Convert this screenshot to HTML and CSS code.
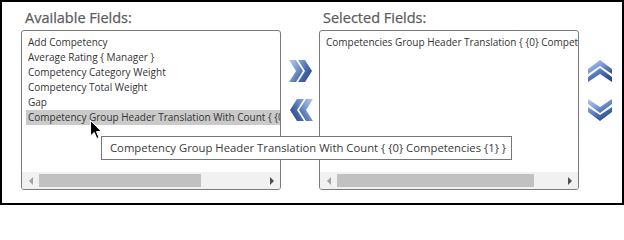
FILE: index.html
```html
<!DOCTYPE html>
<html>
<head>
<meta charset="utf-8">
<link rel="stylesheet" href="styles.css">
</head>
<body>
<svg class="defs" width="0" height="0">
  <defs>
    <linearGradient id="gA" x1="0" y1="0" x2="1" y2="1">
      <stop offset="0" stop-color="#b6c9ec"/>
      <stop offset="0.45" stop-color="#7f9dd4"/>
      <stop offset="1" stop-color="#2b4d92"/>
    </linearGradient>
    <linearGradient id="gB" x1="0" y1="0" x2="1" y2="1">
      <stop offset="0" stop-color="#8aa6dc"/>
      <stop offset="0.5" stop-color="#4a6bb0"/>
      <stop offset="1" stop-color="#1e3c7e"/>
    </linearGradient>
  </defs>
</svg>
<div class="frame">
  <div class="col">
    <div class="label">Available Fields:</div>
    <div class="listbox">
      <div class="items">
        <div class="item">Add Competency</div>
        <div class="item">Average Rating { Manager }</div>
        <div class="item">Competency Category Weight</div>
        <div class="item">Competency Total Weight</div>
        <div class="item">Gap</div>
        <div class="item sel">Competency Group Header Translation With Count { {0} Competencies {1} }</div>
      </div>
      <div class="hscroll">
        <div class="sbtn"><span class="tri-l dim"></span></div>
        <div class="track"><div class="thumb thumb-left"></div></div>
        <div class="sbtn"><span class="tri-r"></span></div>
      </div>
    </div>
  </div>
  <div class="mid">
    <svg class="icon ic-add" viewBox="0 0 26 24" width="26" height="24">
      <polygon points="1,1 8,1 15,12 8,23 1,23 8,12" fill="url(#gA)"/>
      <polygon points="10,1 17,1 24,12 17,23 10,23 17,12" fill="url(#gB)"/>
    </svg>
    <svg class="icon ic-rem" viewBox="0 0 26 24" width="26" height="24">
      <g transform="translate(26,0) scale(-1,1)">
        <polygon points="1,1 8,1 15,12 8,23 1,23 8,12" fill="url(#gA)"/>
        <polygon points="10,1 17,1 24,12 17,23 10,23 17,12" fill="url(#gB)"/>
      </g>
    </svg>
  </div>
  <div class="col">
    <div class="label">Selected Fields:</div>
    <div class="listbox">
      <div class="items">
        <div class="item">Competencies Group Header Translation { {0} Competencies {1} }</div>
      </div>
      <div class="hscroll">
        <div class="sbtn"><span class="tri-l dim"></span></div>
        <div class="track"><div class="thumb thumb-right"></div></div>
        <div class="sbtn"><span class="tri-r"></span></div>
      </div>
    </div>
  </div>
  <div class="side">
    <svg class="icon ic-up" viewBox="0 0 26 24" width="26" height="24">
      <polygon points="1,10 13,1 25,10 25,15 13,7 1,15" fill="url(#gA)"/>
      <polygon points="1,18 13,9 25,18 25,23 13,15 1,23" fill="url(#gB)"/>
    </svg>
    <svg class="icon ic-down" viewBox="0 0 26 24" width="26" height="24">
      <polygon points="1,1 13,9 25,1 25,6 13,15 1,6" fill="url(#gA)"/>
      <polygon points="1,9 13,17 25,9 25,14 13,23 1,14" fill="url(#gB)"/>
    </svg>
  </div>
  <div class="tooltip">Competency Group Header Translation With Count { {0} Competencies {1} }</div>
  <svg class="cursor" viewBox="0 0 13 20" width="13" height="20">
    <polygon points="0.5,0.5 0.5,16 4.2,12.4 6.8,18.5 9,17.6 6.5,11.6 11.5,11.6" fill="#000" stroke="#fff" stroke-width="1"/>
  </svg>
</div>
</body>
</html>
```
FILE: styles.css
```css
html, body {
  margin: 0;
  padding: 0;
  background: #fff;
}
.defs {
  position: absolute;
  width: 0;
  height: 0;
}
.frame {
  position: relative;
  width: 624px;
  height: 205px;
  box-sizing: border-box;
  border: 2px solid #000;
  display: flex;
  padding-left: 19px;
  font-family: "Open Sans", "Noto Sans", sans-serif;
}
.col {
  width: 260px;
  display: flex;
  flex-direction: column;
}
.label {
  height: 28px;
  box-sizing: border-box;
  padding: 7px 0 0 4px;
  font-size: 14.5px;
  line-height: 17px;
  color: #5c5c5c;
  font-weight: 400;
  -webkit-text-stroke: 0.25px #5c5c5c;
}
.listbox {
  height: 160px;
  box-sizing: border-box;
  border: 1px solid #7b7b7b;
  border-radius: 3px;
  overflow: hidden;
  display: flex;
  flex-direction: column;
}
.items {
  flex: 1;
  padding: 4px 0 0 4px;
  overflow: hidden;
}
.item {
  height: 15px;
  line-height: 15px;
  font-size: 10px;
  color: #333;
  white-space: nowrap;
  overflow: hidden;
  padding-left: 2px;
}
.item.sel {
  background: #cacaca;
}
.hscroll {
  height: 17px;
  display: flex;
  background: #f1f1f1;
}
.sbtn {
  width: 17px;
  display: flex;
  align-items: center;
  justify-content: center;
}
.track {
  flex: 1;
  display: flex;
  align-items: center;
}
.thumb {
  height: 13px;
  background: #c1c1c1;
}
.thumb-left {
  width: 162px;
}
.thumb-right {
  width: 197px;
}
.tri-l {
  width: 0;
  height: 0;
  border-top: 4px solid transparent;
  border-bottom: 4px solid transparent;
  border-right: 4px solid #505050;
}
.tri-r {
  width: 0;
  height: 0;
  border-top: 4px solid transparent;
  border-bottom: 4px solid transparent;
  border-left: 4px solid #505050;
}
.tri-l.dim {
  border-right-color: #a3a3a3;
}
.mid {
  width: 38px;
  display: flex;
  flex-direction: column;
  padding: 57px 0 0 7px;
  box-sizing: border-box;
  gap: 15px;
}
.side {
  flex: 1;
  display: flex;
  flex-direction: column;
  padding: 57px 0 0 8px;
  box-sizing: border-box;
  gap: 15px;
}
.icon {
  display: block;
}
.tooltip {
  position: absolute;
  left: 99px;
  top: 134px;
  width: 411px;
  height: 24px;
  box-sizing: border-box;
  border: 1px solid #767676;
  background: #fff;
  color: #3a3a3a;
  font-size: 11.3px;
  line-height: 22px;
  padding-left: 8px;
  white-space: nowrap;
}
.cursor {
  position: absolute;
  left: 88px;
  top: 118px;
}
```
